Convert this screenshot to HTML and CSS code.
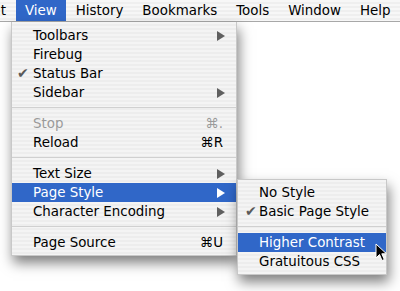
FILE: index.html
```html
<!DOCTYPE html>
<html lang="en">
<head>
  <meta charset="UTF-8" />
  <title>View menu</title>
  <link rel="stylesheet" href="styles.css">
</head>
<body>

  <!-- Menu bar -->
  <div class="menubar">
    <span class="title first">Edit</span>
    <span class="title open">View</span>
    <span class="title">History</span>
    <span class="title">Bookmarks</span>
    <span class="title">Tools</span>
    <span class="title">Window</span>
    <span class="title">Help</span>
  </div>

  <!-- View menu -->
  <div class="menu main">
    <div class="item"><span class="label">Toolbars</span><svg class="arrow" viewBox="0 0 8 10"><polygon points="0,0 8,5 0,10" /></svg></div>
    <div class="item"><span class="label">Firebug</span></div>
    <div class="item"><span class="check">&#10004;</span><span class="label">Status Bar</span></div>
    <div class="item"><span class="label">Sidebar</span><svg class="arrow" viewBox="0 0 8 10"><polygon points="0,0 8,5 0,10" /></svg></div>
    <div class="sep"></div>
    <div class="item disabled"><span class="label">Stop</span><span class="key">&#8984;.</span></div>
    <div class="item"><span class="label">Reload</span><span class="key">&#8984;R</span></div>
    <div class="sep"></div>
    <div class="item"><span class="label">Text Size</span><svg class="arrow" viewBox="0 0 8 10"><polygon points="0,0 8,5 0,10" /></svg></div>
    <div class="item selected"><span class="label">Page Style</span><svg class="arrow" viewBox="0 0 8 10"><polygon points="0,0 8,5 0,10" /></svg></div>
    <div class="item"><span class="label">Character Encoding</span><svg class="arrow" viewBox="0 0 8 10"><polygon points="0,0 8,5 0,10" /></svg></div>
    <div class="sep"></div>
    <div class="item"><span class="label">Page Source</span><span class="key">&#8984;U</span></div>
  </div>

  <!-- Page Style submenu -->
  <div class="menu sub">
    <div class="item"><span class="label">No Style</span></div>
    <div class="item"><span class="check">&#10004;</span><span class="label">Basic Page Style</span></div>
    <div class="sep"></div>
    <div class="item selected"><span class="label">Higher Contrast</span></div>
    <div class="item"><span class="label">Gratuitous CSS</span></div>
  </div>

  <!-- Mouse pointer -->
  <svg class="pointer" viewBox="0 0 12 19">
    <polygon points="1,1 1,15 4.5,11.5 7,17.5 9.3,16.5 6.8,10.8 11.5,10.8" fill="#000" stroke="#fff" stroke-width="1" stroke-linejoin="round" />
  </svg>

</body>
</html>
```

FILE: styles.css
```css
body {
  margin: 0;
  background-color: #fff;
  font-family: "DejaVu Sans", "Liberation Sans", sans-serif;
  font-size: 13.4px;
  color: #000;
  width: 400px;
  height: 291px;
  overflow: hidden;
  position: relative;
}

/* menu bar */
.menubar {
  display: flex;
  height: 21px;
  line-height: 21px;
  border-bottom: 1px solid #a8a8a8;
  background: repeating-linear-gradient(to bottom, #f7f7f7 0, #f7f7f7 2px, #efefef 2px, #efefef 4px);
  white-space: nowrap;
}
.menubar .title {
  padding: 0 9px;
}
.menubar .title.first {
  margin-left: -29px;
}
.menubar .title.open {
  background-color: #3067c8;
  color: #fff;
}
.menubar .title + .title {
  margin-left: 1px;
}

/* menus */
.menu {
  position: absolute;
  box-sizing: border-box;
  background: repeating-linear-gradient(to bottom, #f4f4f4 0, #f4f4f4 2px, #ededed 2px, #ededed 4px);
  box-shadow: 2px 7px 12px rgba(0, 0, 0, 0.5);
  border: 1px solid #c8c8c8;
  border-top: none;
}
.menu.main {
  left: 11px;
  top: 22px;
  width: 226px;
  padding: 4px 0 3px;
}
.menu.sub {
  left: 237px;
  top: 179px;
  width: 150px;
  padding: 3px 0 3px;
  border-top: 1px solid #c8c8c8;
}

.item {
  display: flex;
  align-items: center;
  position: relative;
  height: 19px;
  line-height: 19px;
  padding: 0 11px 0 21px;
  white-space: nowrap;
}
.item .label {
  flex: 1;
}
.item .check {
  position: absolute;
  left: 5px;
  top: 0;
  color: #5a5a5a;
  font-size: 14px;
}
.sub .item .check {
  left: 7px;
}
.item .key {
  padding-right: 2px;
}
.item .arrow {
  width: 8px;
  height: 10px;
  fill: #606060;
}
.item.disabled {
  color: #9a9a9a;
}
.item.selected {
  background-color: #3067c8;
  color: #fff;
}
.item.selected .arrow {
  fill: #fff;
}

.sep {
  height: 12px;
  position: relative;
}
.sep::after {
  content: "";
  position: absolute;
  left: 0;
  right: 0;
  top: 5px;
  height: 1px;
  background-color: #d0d0d0;
}

.pointer {
  position: absolute;
  left: 375px;
  top: 243px;
  width: 12px;
  height: 19px;
}
```
